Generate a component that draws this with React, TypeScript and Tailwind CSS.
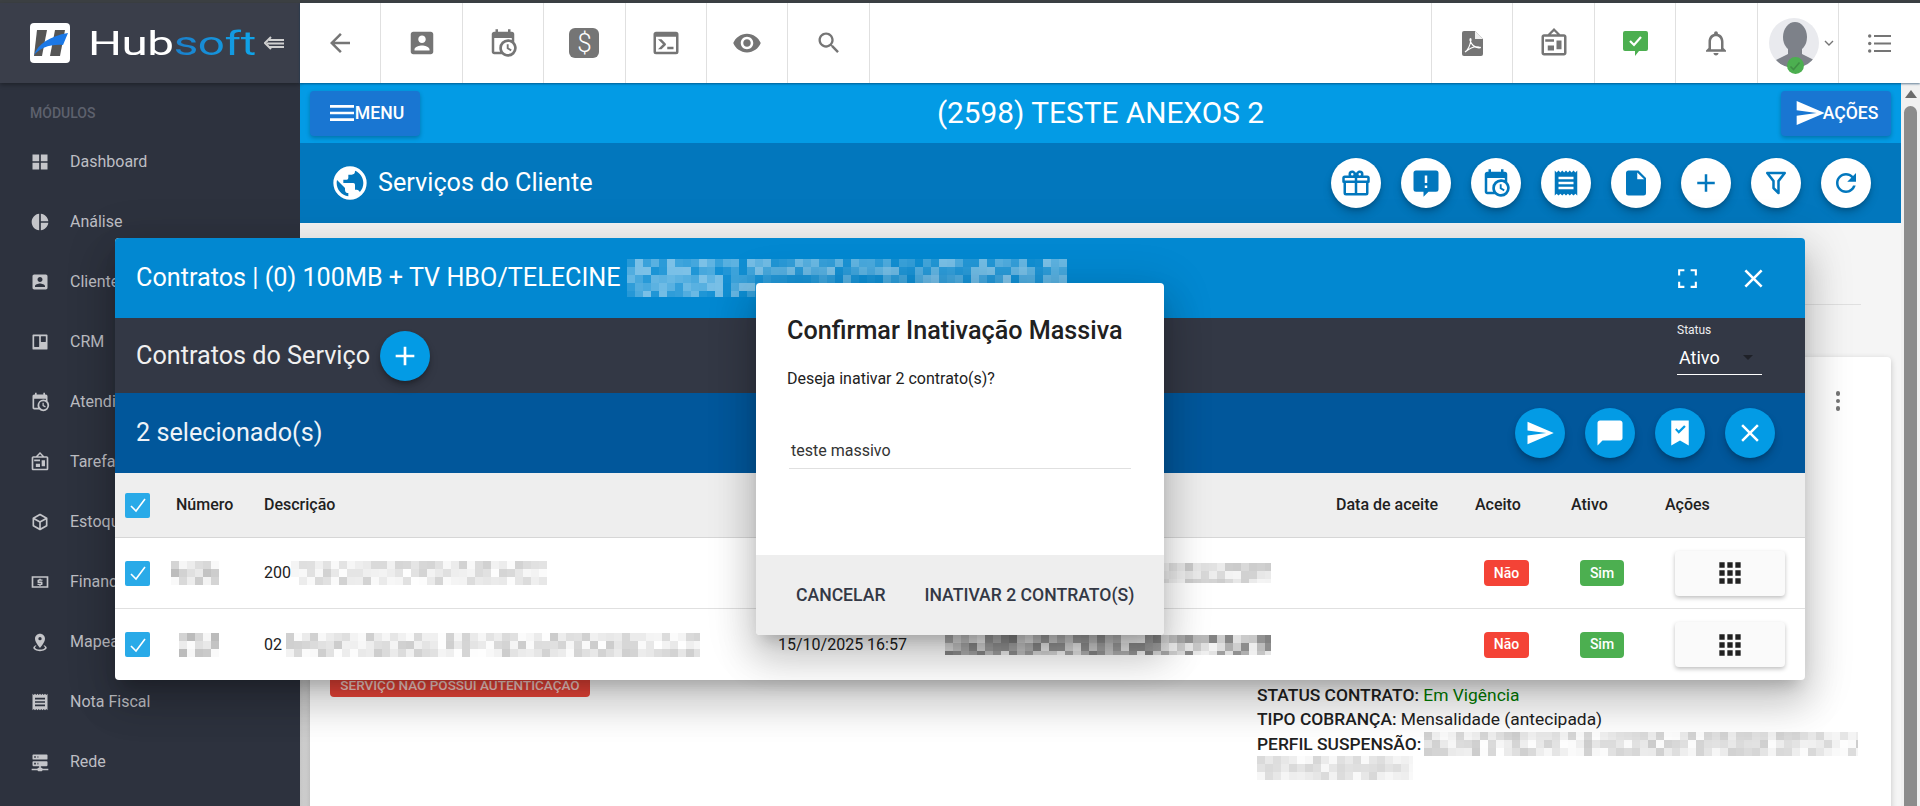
import type { ReactNode } from "react";

const paths = {
  back: "M20 11H7.83l5.59-5.59L12 4l-8 8 8 8 1.41-1.41L7.83 13H20v-2z",
  contact: "M3 5v14c0 1.1.89 2 2 2h14c1.1 0 2-.9 2-2V5c0-1.1-.9-2-2-2H5c-1.11 0-2 .9-2 2zm12 4c0 1.66-1.34 3-3 3s-3-1.34-3-3 1.34-3 3-3 3 1.34 3 3zm-9 8c0-2 4-3.1 6-3.1s6 1.1 6 3.1v1H6v-1z",
  calendar: "M15,13H16.5V15.82L18.94,17.23L18.19,18.53L15,16.69V13M19,8H5V19H9.67C9.24,18.09 9,17.07 9,16A7,7 0 0,1 16,9C17.07,9 18.09,9.24 19,9.67V8M5,21C3.89,21 3,20.1 3,19V5C3,3.89 3.89,3 5,3H6V1H8V3H16V1H18V3H19A2,2 0 0,1 21,5V11.1C22.24,12.36 23,14.09 23,16A7,7 0 0,1 16,23C14.09,23 12.36,22.24 11.1,21H5M16,11.15A4.85,4.85 0 0,0 11.15,16C11.15,18.68 13.32,20.85 16,20.85A4.85,4.85 0 0,0 20.85,16C20.85,13.32 18.68,11.15 16,11.15Z",
  console: "M20,19V7H4V19H20M20,3A2,2 0 0,1 22,5V19A2,2 0 0,1 20,21H4A2,2 0 0,1 2,19V5C2,3.89 2.9,3 4,3H20M13,17V15H18V17H13M9.58,13L5.57,9H8.4L11.7,12.3C12.09,12.69 12.09,13.33 11.7,13.72L8.42,17H5.59L9.58,13Z",
  eye: "M12 4.5C7 4.5 2.73 7.61 1 12c1.73 4.39 6 7.5 11 7.5s9.27-3.11 11-7.5c-1.73-4.39-6-7.5-11-7.5zM12 17c-2.76 0-5-2.24-5-5s2.24-5 5-5 5 2.24 5 5-2.24 5-5 5zm0-8c-1.66 0-3 1.34-3 3s1.34 3 3 3 3-1.34 3-3-1.34-3-3-3z",
  search: "M15.5 14h-.79l-.28-.27C15.41 12.59 16 11.11 16 9.5 16 5.91 13.09 3 9.5 3S3 5.91 3 9.5 5.91 16 9.5 16c1.61 0 3.09-.59 4.23-1.57l.27.28v.79l5 4.99L20.49 19l-4.99-5zm-6 0C7.01 14 5 11.99 5 9.5S7.01 5 9.5 5 14 7.01 14 9.5 11.99 14 9.5 14z",
  board: "M12.04 2.5L9.53 5H14.53L12.04 2.5M4 7V20H20V7H4M12 0L17 5V5H20C21.11 5 22 5.89 22 7V20C22 21.11 21.11 22 20 22H4C2.89 22 2 21.11 2 20V7C2 5.89 2.89 5 4 5H7V5L12 0M7 18V14H12V18H7M14 17V10H18V17H14M5 11V9H12V11H5Z",
  bell: "M12 22c1.1 0 2-.9 2-2h-4c0 1.1.9 2 2 2zm6-6v-5c0-3.07-1.63-5.64-4.5-6.32V4c0-.83-.67-1.5-1.5-1.5s-1.5.67-1.5 1.5v.68C7.64 5.36 6 7.92 6 11v5l-2 2v1h16v-1l-2-2zm-2 1H8v-6c0-2.48 1.51-4.5 4-4.5s4 2.02 4 4.5v6z",
  gift: "M22,12V20A2,2 0 0,1 20,22H4A2,2 0 0,1 2,20V12A1,1 0 0,1 1,11V8A2,2 0 0,1 3,6H6.17C6.06,5.69 6,5.35 6,5A3,3 0 0,1 9,2C10,2 10.88,2.5 11.43,3.24V3.23L12,4L12.57,3.23V3.24C13.12,2.5 14,2 15,2A3,3 0 0,1 18,5C18,5.35 17.94,5.69 17.83,6H21A2,2 0 0,1 23,8V11A1,1 0 0,1 22,12M4,20H11V12H4V20M20,20V12H13V20H20M9,4A1,1 0 0,0 8,5A1,1 0 0,0 9,6A1,1 0 0,0 10,5A1,1 0 0,0 9,4M15,4A1,1 0 0,0 14,5A1,1 0 0,0 15,6A1,1 0 0,0 16,5A1,1 0 0,0 15,4M3,8V10H11V8H3M13,8V10H21V8H13Z",
  alert: "M4 2h16a2 2 0 0 1 2 2v13a2 2 0 0 1-2 2h-6l-4 4v-4H4a2 2 0 0 1-2-2V4a2 2 0 0 1 2-2zM11 6v6h2V6h-2zm0 8v2h2v-2h-2z",
  receipt: "M3,22L4.5,20.5L6,22L7.5,20.5L9,22L10.5,20.5L12,22L13.5,20.5L15,22L16.5,20.5L18,22L19.5,20.5L21,22V2L19.5,3.5L18,2L16.5,3.5L15,2L13.5,3.5L12,2L10.5,3.5L9,2L7.5,3.5L6,2L4.5,3.5L3,2M18,9H6V7H18M18,13H6V11H18M18,17H6V15H18V17Z",
  file: "M13,9V3.5L18.5,9M6,2C4.89,2 4,2.89 4,4V20A2,2 0 0,0 6,22H18A2,2 0 0,0 20,20V8L14,2H6Z",
  plus: "M19 13h-6v6h-2v-6H5v-2h6V5h2v6h6v2z",
  filter: "M15,19.88C15.04,20.18 14.94,20.5 14.71,20.71C14.32,21.1 13.69,21.1 13.3,20.71L9.29,16.7C9.06,16.47 8.96,16.16 9,15.87V10.75L4.21,4.62C3.87,4.19 3.95,3.56 4.38,3.22C4.57,3.08 4.78,3 5,3V3H19V3C19.22,3 19.43,3.08 19.62,3.22C20.05,3.56 20.13,4.19 19.79,4.62L15,10.75V19.88M7.04,5L11,10.06V15.58L13,17.58V10.05L16.96,5H7.04Z",
  refresh: "M17.65 6.35C16.2 4.9 14.21 4 12 4c-4.42 0-7.99 3.58-7.99 8s3.57 8 7.99 8c3.73 0 6.84-2.55 7.73-6h-2.08c-.82 2.33-3.04 4-5.65 4-3.31 0-6-2.69-6-6s2.69-6 6-6c1.66 0 3.14.69 4.22 1.78L13 11h7V4l-2.35 2.35z",
  send: "M2.01 21L23 12 2.01 3 2 10l15 2-15 2z",
  message: "M20 2H4c-1.1 0-1.99.9-1.99 2L2 22l4-4h14c1.1 0 2-.9 2-2V4c0-1.1-.9-2-2-2z",
  bookmark: "M5 2h14v20l-7-4-7 4V2zm6 10.6l5.6-5.6-1.3-1.3-4.3 4.3-1.9-1.9L8.1 9.4l2.9 3.2z",
  close: "M19 6.41L17.59 5 12 10.59 6.41 5 5 6.41 10.59 12 5 17.59 6.41 19 12 13.41 17.59 19 19 17.59 13.41 12z",
  crop: "M3 3h6v2H5v4H3V3zm0 12h2v4h4v2H3v-6zm16 4h-4v2h6v-6h-2v4zm-4-16v2h4v4h2V3h-6z",
  apps: "M4 8h4V4H4v4zm6 12h4v-4h-4v4zm-6 0h4v-4H4v4zm0-6h4v-4H4v4zm6 0h4v-4h-4v4zm6-10v4h4V4h-4zm-6 4h4V4h-4v4zm6 6h4v-4h-4v4zm0 6h4v-4h-4v4z",
  menu: "M3 18h18v-2H3v2zm0-5h18v-2H3v2zm0-7v2h18V6H3z",
  globe: "M17.9,17.39C17.64,16.59 16.89,16 16,16H15V13A1,1 0 0,0 14,12H8V10H10A1,1 0 0,0 11,9V7H13A2,2 0 0,0 15,5V4.59C17.93,5.77 20,8.64 20,12C20,14.08 19.2,15.97 17.9,17.39M11,19.93C7.05,19.44 4,16.08 4,12C4,11.38 4.08,10.78 4.21,10.21L9,15V16A2,2 0 0,0 11,18M12,2A10,10 0 0,0 2,12A10,10 0 0,0 12,22A10,10 0 0,0 22,12A10,10 0 0,0 12,2Z",
  grid: "M3,11H11V3H3M3,21H11V13H3M13,21H21V13H13M13,3V11H21V3",
  pie: "M11,2V22C5.9,21.5 2,17.2 2,12C2,6.8 5.9,2.5 11,2M13,2V11H22C21.5,6.2 17.8,2.5 13,2M13,13V22C17.7,21.5 21.5,17.8 22,13H13Z",
  trello: "M4,3H20A1,1 0 0,1 21,4V20A1,1 0 0,1 20,21H4A1,1 0 0,1 3,20V4A1,1 0 0,1 4,3M5.5,5A0.5,0.5 0 0,0 5,5.5V17.5A0.5,0.5 0 0,0 5.5,18H10.5A0.5,0.5 0 0,0 11,17.5V5.5A0.5,0.5 0 0,0 10.5,5H5.5M13.5,5A0.5,0.5 0 0,0 13,5.5V11.5A0.5,0.5 0 0,0 13.5,12H18.5A0.5,0.5 0 0,0 19,11.5V5.5A0.5,0.5 0 0,0 18.5,5H13.5Z",
  cube: "M21,16.5C21,16.88 20.79,17.21 20.47,17.38L12.57,21.82C12.41,21.94 12.21,22 12,22C11.79,22 11.59,21.94 11.43,21.82L3.53,17.38C3.21,17.21 3,16.88 3,16.5V7.5C3,7.12 3.21,6.79 3.53,6.62L11.43,2.18C11.59,2.06 11.79,2 12,2C12.21,2 12.41,2.06 12.57,2.18L20.47,6.62C20.79,6.79 21,7.12 21,7.5V16.5M12,4.15L6.04,7.5L12,10.85L17.96,7.5L12,4.15M5,15.91L11,19.29V12.58L5,9.21V15.91M19,15.91V9.21L13,12.58V19.29L19,15.91Z",
  cash: "M2 5h20v14H2V5zm2 2v10h16V7H4zm7 1h2v1h2v1.6h-4v.8h3a1 1 0 0 1 1 1v2.2a1 1 0 0 1-1 1h-1v1h-2v-1H9v-1.6h4v-.8h-3a1 1 0 0 1-1-1V10a1 1 0 0 1 1-1h1V8z",
  marker: "M12,2C15.31,2 18,4.66 18,7.95C18,12.41 12,19 12,19C12,19 6,12.41 6,7.95C6,4.66 8.69,2 12,2M12,6A2,2 0 0,0 10,8A2,2 0 0,0 12,10A2,2 0 0,0 14,8A2,2 0 0,0 12,6M20,19C20,21.21 16.42,23 12,23C7.58,23 4,21.21 4,19C4,17.71 5.22,16.56 7.11,15.83L7.75,16.74C6.67,17.19 6,17.81 6,18.5C6,19.88 8.69,21 12,21C15.31,21 18,19.88 18,18.5C18,17.81 17.33,17.19 16.25,16.74L16.89,15.83C18.78,16.56 20,17.71 20,19Z",
  server: "M13,19H14A1,1 0 0,1 15,20H22V22H15A1,1 0 0,1 14,23H10A1,1 0 0,1 9,22H2V20H9A1,1 0 0,1 10,19H11V17H4A1,1 0 0,1 3,16V12A1,1 0 0,1 4,11H20A1,1 0 0,1 21,12V16A1,1 0 0,1 20,17H13V19M4,3H20A1,1 0 0,1 21,4V8A1,1 0 0,1 20,9H4A1,1 0 0,1 3,8V4A1,1 0 0,1 4,3M9,7H10V5H9V7M9,15H10V13H9V15M5,5V7H7V5H5M5,13V15H7V13H5Z",
};

function Icon({ d, className }: { d: string; className?: string }) {
  return (
    <svg viewBox="0 0 24 24" fill="currentColor" fillRule="evenodd" className={className}>
      <path d={d} />
    </svg>
  );
}

// mosaic used where the screenshot has blurred out private data
function Mosaic({ w, h, seed, color = "#000000", min = 0.02, max = 0.28, className }: { w: number; h: number; seed: number; color?: string; min?: number; max?: number; className?: string }) {
  const cell = 8;
  const rects: ReactNode[] = [];
  let s = seed * 9301 + 49297;
  for (let y = 0; y < h; y += cell) {
    for (let x = 0; x < w; x += cell) {
      s = (s * 9301 + 49297) % 233280;
      const o = min + (s / 233280) * (max - min);
      rects.push(<rect key={x + "-" + y} x={x} y={y} width={cell} height={cell} fill={color} opacity={o} />);
    }
  }
  return (
    <svg width={w} height={h} className={className} shapeRendering="crispEdges">
      {rects}
    </svg>
  );
}

function TopCell({ children, border = true }: { children: ReactNode; border?: boolean }) {
  return <div className={"flex h-full w-[81.4px] shrink-0 items-center justify-center text-[#757575] " + (border ? "border-r border-[#e0e0e0]" : "")}>{children}</div>;
}

function Round({ d, dark }: { d: string; dark?: boolean }) {
  return (
    <button className={"flex h-[50px] w-[50px] items-center justify-center rounded-full shadow-[0_3px_5px_-1px_rgba(0,0,0,.2),0_6px_10px_0_rgba(0,0,0,.14)] " + (dark ? "bg-[#039be5] text-white" : "bg-white text-[#0277bd]")}>
      <Icon d={d} className="h-[30px] w-[30px]" />
    </button>
  );
}

const menuItems = [
  { label: "Dashboard", d: paths.grid },
  { label: "Análise", d: paths.pie },
  { label: "Clientes", d: paths.contact },
  { label: "CRM", d: paths.trello },
  { label: "Atendimento", d: paths.calendar },
  { label: "Tarefas", d: paths.board },
  { label: "Estoque", d: paths.cube },
  { label: "Financeiro", d: paths.cash },
  { label: "Mapeamento", d: paths.marker },
  { label: "Nota Fiscal", d: paths.receipt },
  { label: "Rede", d: paths.server },
];

function Sidebar() {
  return (
    <aside className="flex w-[300px] shrink-0 flex-col bg-[#2d323e]">
      <div className="z-10 flex h-[80px] shrink-0 items-center bg-[#3a3e4a] pl-[30px] shadow-[0_2px_4px_rgba(0,0,0,.3)]">
        <svg viewBox="0 0 40 40" className="h-[40px] w-[40px] shrink-0">
          <rect width="40" height="40" rx="4" fill="#ffffff" />
          <polygon points="7,7 17,7 12,33 4,33" fill="#555555" />
          <polygon points="25,7 35,7 30,33 20,33" fill="#555555" />
          <path d="M4 32 C8 21 20 13 38 10 L33 22 C20 21 10 25 4 32 Z" fill="#1b78e6" />
        </svg>
        <span className="ml-[18px] inline-block w-[165px] origin-left scale-x-[1.4] text-[34px] leading-none font-normal tracking-[-0.3px] whitespace-nowrap text-white">
          Hub<span className="bg-linear-to-r from-[#1a7fcb] to-[#0ea5ea] bg-clip-text text-transparent">soft</span>
        </span>
        <svg viewBox="0 0 20 14" fill="none" stroke="#d0d0d0" strokeWidth="2" className="ml-[11px] h-[14px] w-[20px]">
          <polyline points="7,1 1,7 7,13" />
          <line x1="5" y1="4" x2="20" y2="4" />
          <line x1="3" y1="7.5" x2="20" y2="7.5" />
          <line x1="5" y1="11" x2="20" y2="11" />
        </svg>
      </div>
      <div className="h-[49px] shrink-0 pt-[20px] pl-[30px] text-[14px] leading-5 font-medium text-[#5d616d]">MÓDULOS</div>
      {menuItems.map((item) => (
        <div key={item.label} className="flex h-[60px] shrink-0 items-center pl-[30px] text-[16px] text-[#bdbec3]">
          <Icon d={item.d} className="h-[20px] w-[20px] shrink-0 text-[#c4c5c9]" />
          <span className="ml-[20px]">{item.label}</span>
        </div>
      ))}
    </aside>
  );
}

function TopBar() {
  return (
    <header className="z-10 flex h-[80px] shrink-0 items-center bg-white shadow-[0_1px_2px_rgba(0,50,90,.6)]">
      <TopCell><Icon d={paths.back} className="h-[30px] w-[30px]" /></TopCell>
      <TopCell><Icon d={paths.contact} className="h-[30px] w-[30px]" /></TopCell>
      <TopCell><Icon d={paths.calendar} className="h-[30px] w-[30px]" /></TopCell>
      <TopCell>
        <div className="flex h-[30px] w-[30px] items-center justify-center rounded-[6px] bg-[#757575] text-[26px] font-light text-white">$</div>
      </TopCell>
      <TopCell><Icon d={paths.console} className="h-[30px] w-[30px]" /></TopCell>
      <TopCell><Icon d={paths.eye} className="h-[30px] w-[30px]" /></TopCell>
      <TopCell><Icon d={paths.search} className="h-[28px] w-[28px]" /></TopCell>
      <div className="h-full flex-1 border-r border-[#e0e0e0]" />
      <TopCell>
        <svg viewBox="0 0 21 25" className="h-[25px] w-[21px]">
          <path d="M2 0h11l8 8v15a2 2 0 0 1-2 2H2a2 2 0 0 1-2-2V2a2 2 0 0 1 2-2z" fill="#757575" />
          <path d="M13 0l8 8h-8z" fill="#eeeeee" />
          <path d="M3 21c3-2 5-6 6-12 0-2-1-2-1 0 1 4 3 7 9 8 2 0 2-1 0-1-4-1-9 1-14 5z" fill="none" stroke="#ffffff" strokeWidth="1.2" />
        </svg>
      </TopCell>
      <TopCell><Icon d={paths.board} className="h-[30px] w-[30px]" /></TopCell>
      <TopCell>
        <svg viewBox="0 0 25 25" className="h-[25px] w-[25px]">
          <path d="M2 0h21a2 2 0 0 1 2 2v16a2 2 0 0 1-2 2h-7l-4 5v-5H2a2 2 0 0 1-2-2V2a2 2 0 0 1 2-2z" fill="#4caf50" />
          <polyline points="7,10 11,14 18,6" fill="none" stroke="#ffffff" strokeWidth="2.2" />
        </svg>
      </TopCell>
      <TopCell><Icon d={paths.bell} className="h-[30px] w-[30px]" /></TopCell>
      <div className="flex h-full w-[81.4px] shrink-0 items-center border-r border-[#e0e0e0] pl-[11px]">
        <div className="relative h-[50px] w-[50px] shrink-0 rounded-full bg-[#e9eaee]">
          <svg viewBox="0 0 50 50" className="h-[50px] w-[50px] rounded-full">
            <ellipse cx="26" cy="19" rx="12" ry="15" fill="#7d8189" />
            <path d="M19 30h14v6l12 6c-4 5-12 8-20 8s-14-3-18-8l12-6z" fill="#7d8189" />
          </svg>
          <div className="absolute top-[39px] left-[18px] flex h-[17px] w-[17px] items-center justify-center rounded-full bg-[#4caf50]">
            <svg viewBox="0 0 12 12" fill="none" stroke="#3f8f44" strokeWidth="1.6" className="h-[12px] w-[12px]"><polyline points="1.5,6.5 4.5,9.5 10.5,2.5" /></svg>
          </div>
        </div>
        <svg viewBox="0 0 10 6" fill="none" stroke="#757575" strokeWidth="1.4" className="ml-[5px] h-[6px] w-[10px]"><polyline points="1,1 5,5 9,1" /></svg>
      </div>
      <div className="flex h-full w-[81px] shrink-0 items-center justify-center text-[#757575]">
        <svg viewBox="0 0 23 19" fill="currentColor" className="h-[19px] w-[23px]">
          <circle cx="1.7" cy="2" r="1.7" /><circle cx="1.7" cy="9.5" r="1.7" /><circle cx="1.7" cy="17" r="1.7" />
          <rect x="6" y="1" width="17" height="2" /><rect x="6" y="8.5" width="17" height="2" /><rect x="6" y="16" width="17" height="2" />
        </svg>
      </div>
    </header>
  );
}

function PageContent() {
  return (
    <div className="flex min-h-0 flex-1">
      <div className="flex min-w-0 flex-1 flex-col">
        <div className="flex h-[60px] shrink-0 items-center justify-between bg-[#039be5] px-[10px]">
          <button className="flex h-[45px] w-[110px] items-center justify-center rounded-[4px] bg-[#1976d2] text-[17.6px] font-medium text-white shadow-[0_2px_4px_rgba(0,0,0,.25)]">
            <Icon d={paths.menu} className="h-[32px] w-[32px]" />
            <span className="-ml-[3px]">MENU</span>
          </button>
          <h1 className="text-[29.8px] leading-none font-normal text-white">(2598) TESTE ANEXOS 2</h1>
          <button className="flex h-[45px] w-[110px] items-center justify-center rounded-[4px] bg-[#1976d2] text-[17.6px] font-medium text-white shadow-[0_2px_4px_rgba(0,0,0,.25)]">
            <Icon d={paths.send} className="h-[32px] w-[32px]" />
            <span className="-ml-[3px]">AÇÕES</span>
          </button>
        </div>
        <div className="flex h-[80px] shrink-0 items-center justify-between bg-[#0277bd] pr-[30px] pl-[30px]">
          <div className="flex items-center">
            <Icon d={paths.globe} className="h-[40px] w-[40px] text-white" />
            <span className="ml-[8px] text-[25.2px] text-white">Serviços do Cliente</span>
          </div>
          <div className="flex gap-[20px]">
            <Round d={paths.gift} />
            <Round d={paths.alert} />
            <Round d={paths.calendar} />
            <Round d={paths.receipt} />
            <Round d={paths.file} />
            <Round d={paths.plus} />
            <Round d={paths.filter} />
            <Round d={paths.refresh} />
          </div>
        </div>
        <div className="min-h-0 flex-1 bg-[#f5f5f5]">
          <div className="mr-[40px] mb-[52px] ml-[10px] h-[82px] border-b border-[#e0e0e0]" />
          <div className="flex h-[600px]">
            <div className="w-[10px] shrink-0 bg-linear-to-r from-[#c6c6c6] to-[#d6d6d6]" />
            <div className="mr-[10px] flex min-w-0 flex-1 rounded-[4px] bg-white shadow-[0_2px_6px_rgba(0,0,0,.2)]">
              <div className="w-[947px] shrink-0 pt-[316px] pl-[20px]">
                <span className="inline-block w-[260px] rounded-[4px] bg-[#ea4438] text-center text-[13.5px] leading-[24px] font-medium text-[#f7cfca]">SERVIÇO NÃO POSSUI AUTENTICAÇÃO</span>
              </div>
              <div className="flex min-w-0 flex-1 flex-col text-[17.4px] leading-[24.5px] text-[#212121]">
                <div className="mt-[34px] mr-[51px] flex flex-col gap-[3px] self-end">
                  <span className="h-[4.5px] w-[4.5px] rounded-full bg-[#757575]" />
                  <span className="h-[4.5px] w-[4.5px] rounded-full bg-[#757575]" />
                  <span className="h-[4.5px] w-[4.5px] rounded-full bg-[#757575]" />
                </div>
                <div className="mt-[272px]"><b className="font-medium">STATUS CONTRATO:</b> <span className="text-[#007a00]">Em Vigência</span></div>
                <div><b className="font-medium">TIPO COBRANÇA:</b> Mensalidade (antecipada)</div>
                <div className="flex items-center"><b className="font-medium whitespace-nowrap">PERFIL SUSPENSÃO:</b><Mosaic w={434} h={24} seed={11} max={0.2} min={0} className="ml-[3px] -my-[1px]" /></div>
                <Mosaic w={156} h={24} seed={5} max={0.16} min={0.01} />
              </div>
            </div>
          </div>
        </div>
      </div>
      <div className="w-[19px] shrink-0 bg-[#f1f1f1]">
        <div className="mx-auto mt-[7px] h-0 w-0 border-x-[6px] border-b-[8px] border-x-transparent border-b-[#6b6b6b]" />
        <div className="mx-auto mt-[8px] h-[720px] w-[13px] rounded-full bg-[#8c8c8c]" />
      </div>
    </div>
  );
}

const cols = "grid grid-cols-[61px_88px_514px_167px_391px_139px_96px_94px_140px] items-center";

function Check() {
  return (
    <div className="ml-[10px] flex h-[25px] w-[25px] items-center justify-center rounded-[2px] bg-[#29aae8]">
      <svg viewBox="0 0 18 18" fill="none" stroke="#ffffff" strokeWidth="1.6" className="h-[18px] w-[18px]"><polyline points="2,10 7,15 16,3" /></svg>
    </div>
  );
}

function Row({ number, desc, seeds, last }: { number: ReactNode; desc: ReactNode; seeds: number; last?: boolean }) {
  return (
    <div className={cols + " h-[71px] text-[16px] text-[#212121] " + (last ? "" : "border-b border-[#e0e0e0]")}>
      <Check />
      <div>{number}</div>
      <div className="flex items-center">{desc}</div>
      <div className="whitespace-nowrap">15/10/2025 16:57</div>
      <Mosaic w={326} h={20} seed={seeds} min={0.04} max={last ? 0.5 : 0.22} />
      <div />
      <div className="pl-[9px]"><span className="inline-flex h-[26px] w-[45px] items-center justify-center rounded-[4px] bg-[#f44336] text-[14px] font-medium text-white">Não</span></div>
      <div className="pl-[9px]"><span className="inline-flex h-[26px] w-[44px] items-center justify-center rounded-[4px] bg-[#4caf50] text-[14px] font-medium text-white">Sim</span></div>
      <div className="pl-[10px]">
        <button className="flex h-[45px] w-[110px] items-center justify-center rounded-[4px] bg-[#fafafa] text-[#212121] shadow-[0_2px_4px_rgba(0,0,0,.25)]">
          <Icon d={paths.apps} className="h-[32px] w-[32px]" />
        </button>
      </div>
    </div>
  );
}

function ContractsDialog() {
  return (
    <div className="absolute top-[238px] left-[115px] z-20 w-[1690px] overflow-hidden rounded-[4px] bg-white shadow-[0_11px_15px_-7px_rgba(0,0,0,.2),0_24px_38px_3px_rgba(0,0,0,.14),0_9px_46px_8px_rgba(0,0,0,.12)]">
      <div className="flex h-[80px] items-center bg-[#0288d1] pr-[36px] pl-[21px] text-white">
        <span className="text-[25.2px] whitespace-nowrap">Contratos | (0) 100MB + TV HBO/TELECINE</span>
        <Mosaic w={440} h={38} seed={3} color="#ffffff" min={0.05} max={0.5} className="ml-[6px]" />
        <div className="ml-auto flex items-center gap-[38px]">
          <Icon d={paths.crop} className="h-[25px] w-[25px]" />
          <Icon d={paths.close} className="h-[31px] w-[31px]" />
        </div>
      </div>
      <div className="flex h-[75px] bg-[#333845] pr-[43px] pl-[21px]">
        <div className="flex items-center">
          <span className="text-[25.2px] text-[#f0f0f0]">Contratos do Serviço</span>
          <button className="ml-[10px] flex h-[50px] w-[50px] items-center justify-center rounded-full bg-[#039be5] text-white shadow-[0_3px_5px_-1px_rgba(0,0,0,.3),0_6px_10px_0_rgba(0,0,0,.14)]">
            <Icon d={paths.plus} className="h-[32px] w-[32px]" />
          </button>
        </div>
        <div className="ml-auto w-[85px] pt-[5px] text-white">
          <div className="text-[12px] leading-[14px] text-[#eeeeee]">Status</div>
          <div className="mt-[4px] flex h-[34px] items-center justify-between border-b-[1.5px] border-white pr-[10px] pl-[2px] text-[18px]">
            <span>Ativo</span>
            <span className="mr-[-1px] h-0 w-0 border-x-[5px] border-t-[5px] border-x-transparent border-t-[#1f2128]" />
          </div>
        </div>
      </div>
      <div className="flex h-[80px] items-center justify-between bg-[#01579b] pr-[30px] pl-[21px]">
        <span className="text-[25.2px] text-[#eef3f8]">2 selecionado(s)</span>
        <div className="flex gap-[20px]">
          <Round d={paths.send} dark />
          <Round d={paths.message} dark />
          <Round d={paths.bookmark} dark />
          <Round d={paths.close} dark />
        </div>
      </div>
      <div className={cols + " h-[65px] border-b border-[#d6d6d6] bg-[#eeeeee] text-[16px] font-medium text-[#212121]"}>
        <Check />
        <div>Número</div>
        <div>Descrição</div>
        <div />
        <div />
        <div>Data de aceite</div>
        <div>Aceito</div>
        <div>Ativo</div>
        <div>Ações</div>
      </div>
      <Row seeds={21} number={<Mosaic w={48} h={24} seed={7} min={0} max={0.3} className="-ml-[5px]" />} desc={<><span>200</span><Mosaic w={256} h={24} seed={9} min={0} max={0.18} /></>} />
      <Row seeds={31} last number={<Mosaic w={40} h={24} seed={13} min={0} max={0.3} className="ml-[3px]" />} desc={<><span>02</span><Mosaic w={414} h={24} seed={17} min={0} max={0.2} className="ml-[4px]" /></>} />
    </div>
  );
}

function ConfirmDialog() {
  return (
    <div className="absolute top-[283px] left-[756px] z-30 flex h-[352px] w-[408px] flex-col overflow-hidden rounded-[4px] bg-white shadow-[0_11px_15px_-7px_rgba(0,0,0,.2),0_24px_38px_3px_rgba(0,0,0,.14),0_9px_46px_8px_rgba(0,0,0,.12)]">
      <div className="flex-1 px-[31px]">
        <h2 className="mt-[32px] text-[25.2px] leading-[32px] font-medium whitespace-nowrap text-[#212121]">Confirmar Inativação Massiva</h2>
        <p className="mt-[20px] text-[16px] leading-[24px] text-[#212121]">Deseja inativar 2 contrato(s)?</p>
        <div className="mt-[42px] ml-[2px] flex h-[36px] w-[342px] items-center border-b border-[#e0e0e0] pl-[2px] text-[16px] text-[#333333]">teste massivo</div>
      </div>
      <div className="flex h-[80px] shrink-0 items-center bg-[#eeeeee] pl-[40px] text-[17.6px] font-medium whitespace-nowrap text-[#333845]">
        <span>CANCELAR</span>
        <span className="ml-[39px]">INATIVAR 2 CONTRATO(S)</span>
      </div>
    </div>
  );
}

export default function App() {
  return (
    <div className="relative flex h-[806px] w-full flex-col overflow-hidden bg-[#f5f5f5] font-[Roboto,sans-serif]">
      <div className="h-[3px] shrink-0 bg-[#3c4043]" />
      <div className="flex min-h-0 flex-1">
        <Sidebar />
        <div className="flex min-w-0 flex-1 flex-col">
          <TopBar />
          <PageContent />
        </div>
      </div>
      <ContractsDialog />
      <ConfirmDialog />
    </div>
  );
}
